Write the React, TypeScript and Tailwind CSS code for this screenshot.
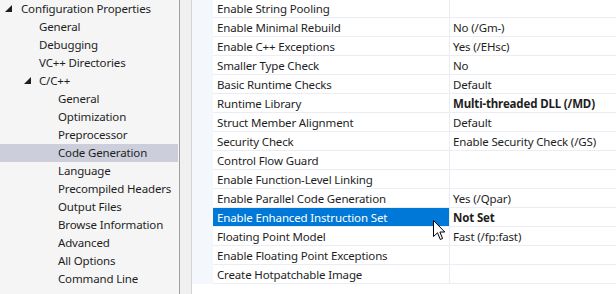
const font = { fontFamily: '"Segoe UI", "Noto Sans", sans-serif' };

type TreeItem = { label: string; level: number; arrow?: "open" | "closed"; selected?: boolean };

const tree: TreeItem[] = [
  { label: "Configuration Properties", level: 0, arrow: "open" },
  { label: "General", level: 1 },
  { label: "Debugging", level: 1 },
  { label: "VC++ Directories", level: 1 },
  { label: "C/C++", level: 1, arrow: "open" },
  { label: "General", level: 2 },
  { label: "Optimization", level: 2 },
  { label: "Preprocessor", level: 2 },
  { label: "Code Generation", level: 2, selected: true },
  { label: "Language", level: 2 },
  { label: "Precompiled Headers", level: 2 },
  { label: "Output Files", level: 2 },
  { label: "Browse Information", level: 2 },
  { label: "Advanced", level: 2 },
  { label: "All Options", level: 2 },
  { label: "Command Line", level: 2 },
  { label: "Linker", level: 1, arrow: "closed" },
];

type Prop = { name: string; value: string; bold?: boolean; selected?: boolean };

const props: Prop[] = [
  { name: "Enable String Pooling", value: "" },
  { name: "Enable Minimal Rebuild", value: "No (/Gm-)" },
  { name: "Enable C++ Exceptions", value: "Yes (/EHsc)" },
  { name: "Smaller Type Check", value: "No" },
  { name: "Basic Runtime Checks", value: "Default" },
  { name: "Runtime Library", value: "Multi-threaded DLL (/MD)", bold: true },
  { name: "Struct Member Alignment", value: "Default" },
  { name: "Security Check", value: "Enable Security Check (/GS)" },
  { name: "Control Flow Guard", value: "" },
  { name: "Enable Function-Level Linking", value: "" },
  { name: "Enable Parallel Code Generation", value: "Yes (/Qpar)" },
  { name: "Enable Enhanced Instruction Set", value: "Not Set", bold: true, selected: true },
  { name: "Floating Point Model", value: "Fast (/fp:fast)" },
  { name: "Enable Floating Point Exceptions", value: "" },
  { name: "Create Hotpatchable Image", value: "" },
];

const indent = ["pl-[21px]", "pl-[39px]", "pl-[58px]"];
const arrowPos = ["left-[5px]", "left-[24px]", "left-[43px]"];

const Arrow = ({ kind }: { kind: "open" | "closed" }) =>
  kind === "open" ? (
    <svg width="7" height="7" viewBox="0 0 7 7">
      <polygon points="7,0 7,7 0,7" fill="#1e1e1e" />
    </svg>
  ) : (
    <svg width="6" height="9" viewBox="0 0 6 9">
      <polygon points="0.5,0.5 5.5,4.5 0.5,8.5" fill="none" stroke="#1e1e1e" />
    </svg>
  );

export default function App() {
  return (
    <div
      className="flex w-[616px] h-[294px] overflow-hidden text-[11.5px] tracking-[-0.15px] text-[#1e1e1e] bg-white"
      style={font}
    >
      <div className="w-[178px] shrink-0 bg-[#f5f5f5] flex flex-col">
        {tree.map((t, i) => (
          <div
            key={i}
            className={`relative h-[18px] shrink-0 leading-[18px] whitespace-nowrap ${indent[t.level]} ${
              t.selected ? "bg-[#cccedb]" : ""
            } ${t.arrow === "closed" ? "mt-[1px]" : ""}`}
          >
            {t.arrow && (
              <span className={`absolute top-[5px] ${arrowPos[t.level]} flex`}>
                <Arrow kind={t.arrow} />
              </span>
            )}
            {t.label}
          </div>
        ))}
      </div>
      <div className="w-px shrink-0 bg-[#f5f5f5]" />
      <div className="w-px shrink-0 bg-[#a0a0a0]" />
      <div className="w-[11px] shrink-0 bg-[#f0f0f0]" />
      <div className="w-px shrink-0 bg-[#d4d4d4]" />
      <div className="relative flex-1 flex flex-col mt-[-1px]">
        {props.map((p, i) => (
          <div key={i} className="flex h-[19px] shrink-0">
            <div className="w-[21px] shrink-0 bg-[#f4f7fc]" />
            <div
              className={`w-[236px] shrink-0 pl-[4px] pt-px leading-[17px] whitespace-nowrap border-b border-[#ececf4] ${
                p.selected ? "bg-[#0078d7] text-white" : ""
              }`}
            >
              {p.name}
            </div>
            <div
              className={`flex-1 pl-[3px] pt-px leading-[17px] whitespace-nowrap border-l border-b border-[#ececf4] ${
                p.bold ? "font-bold" : ""
              }`}
            >
              {p.value}
            </div>
          </div>
        ))}
        <svg
          className="absolute left-[241px] top-[221px]"
          width="13"
          height="21"
          viewBox="0 0 13 21"
        >
          <path
            d="M0.5,0.5 L0.5,16.5 L4.5,12.8 L7.3,19.5 L9.6,18.5 L6.9,12 L11.8,12 Z"
            fill="white"
            stroke="black"
            strokeWidth="1"
            strokeLinejoin="miter"
          />
        </svg>
      </div>
    </div>
  );
}
